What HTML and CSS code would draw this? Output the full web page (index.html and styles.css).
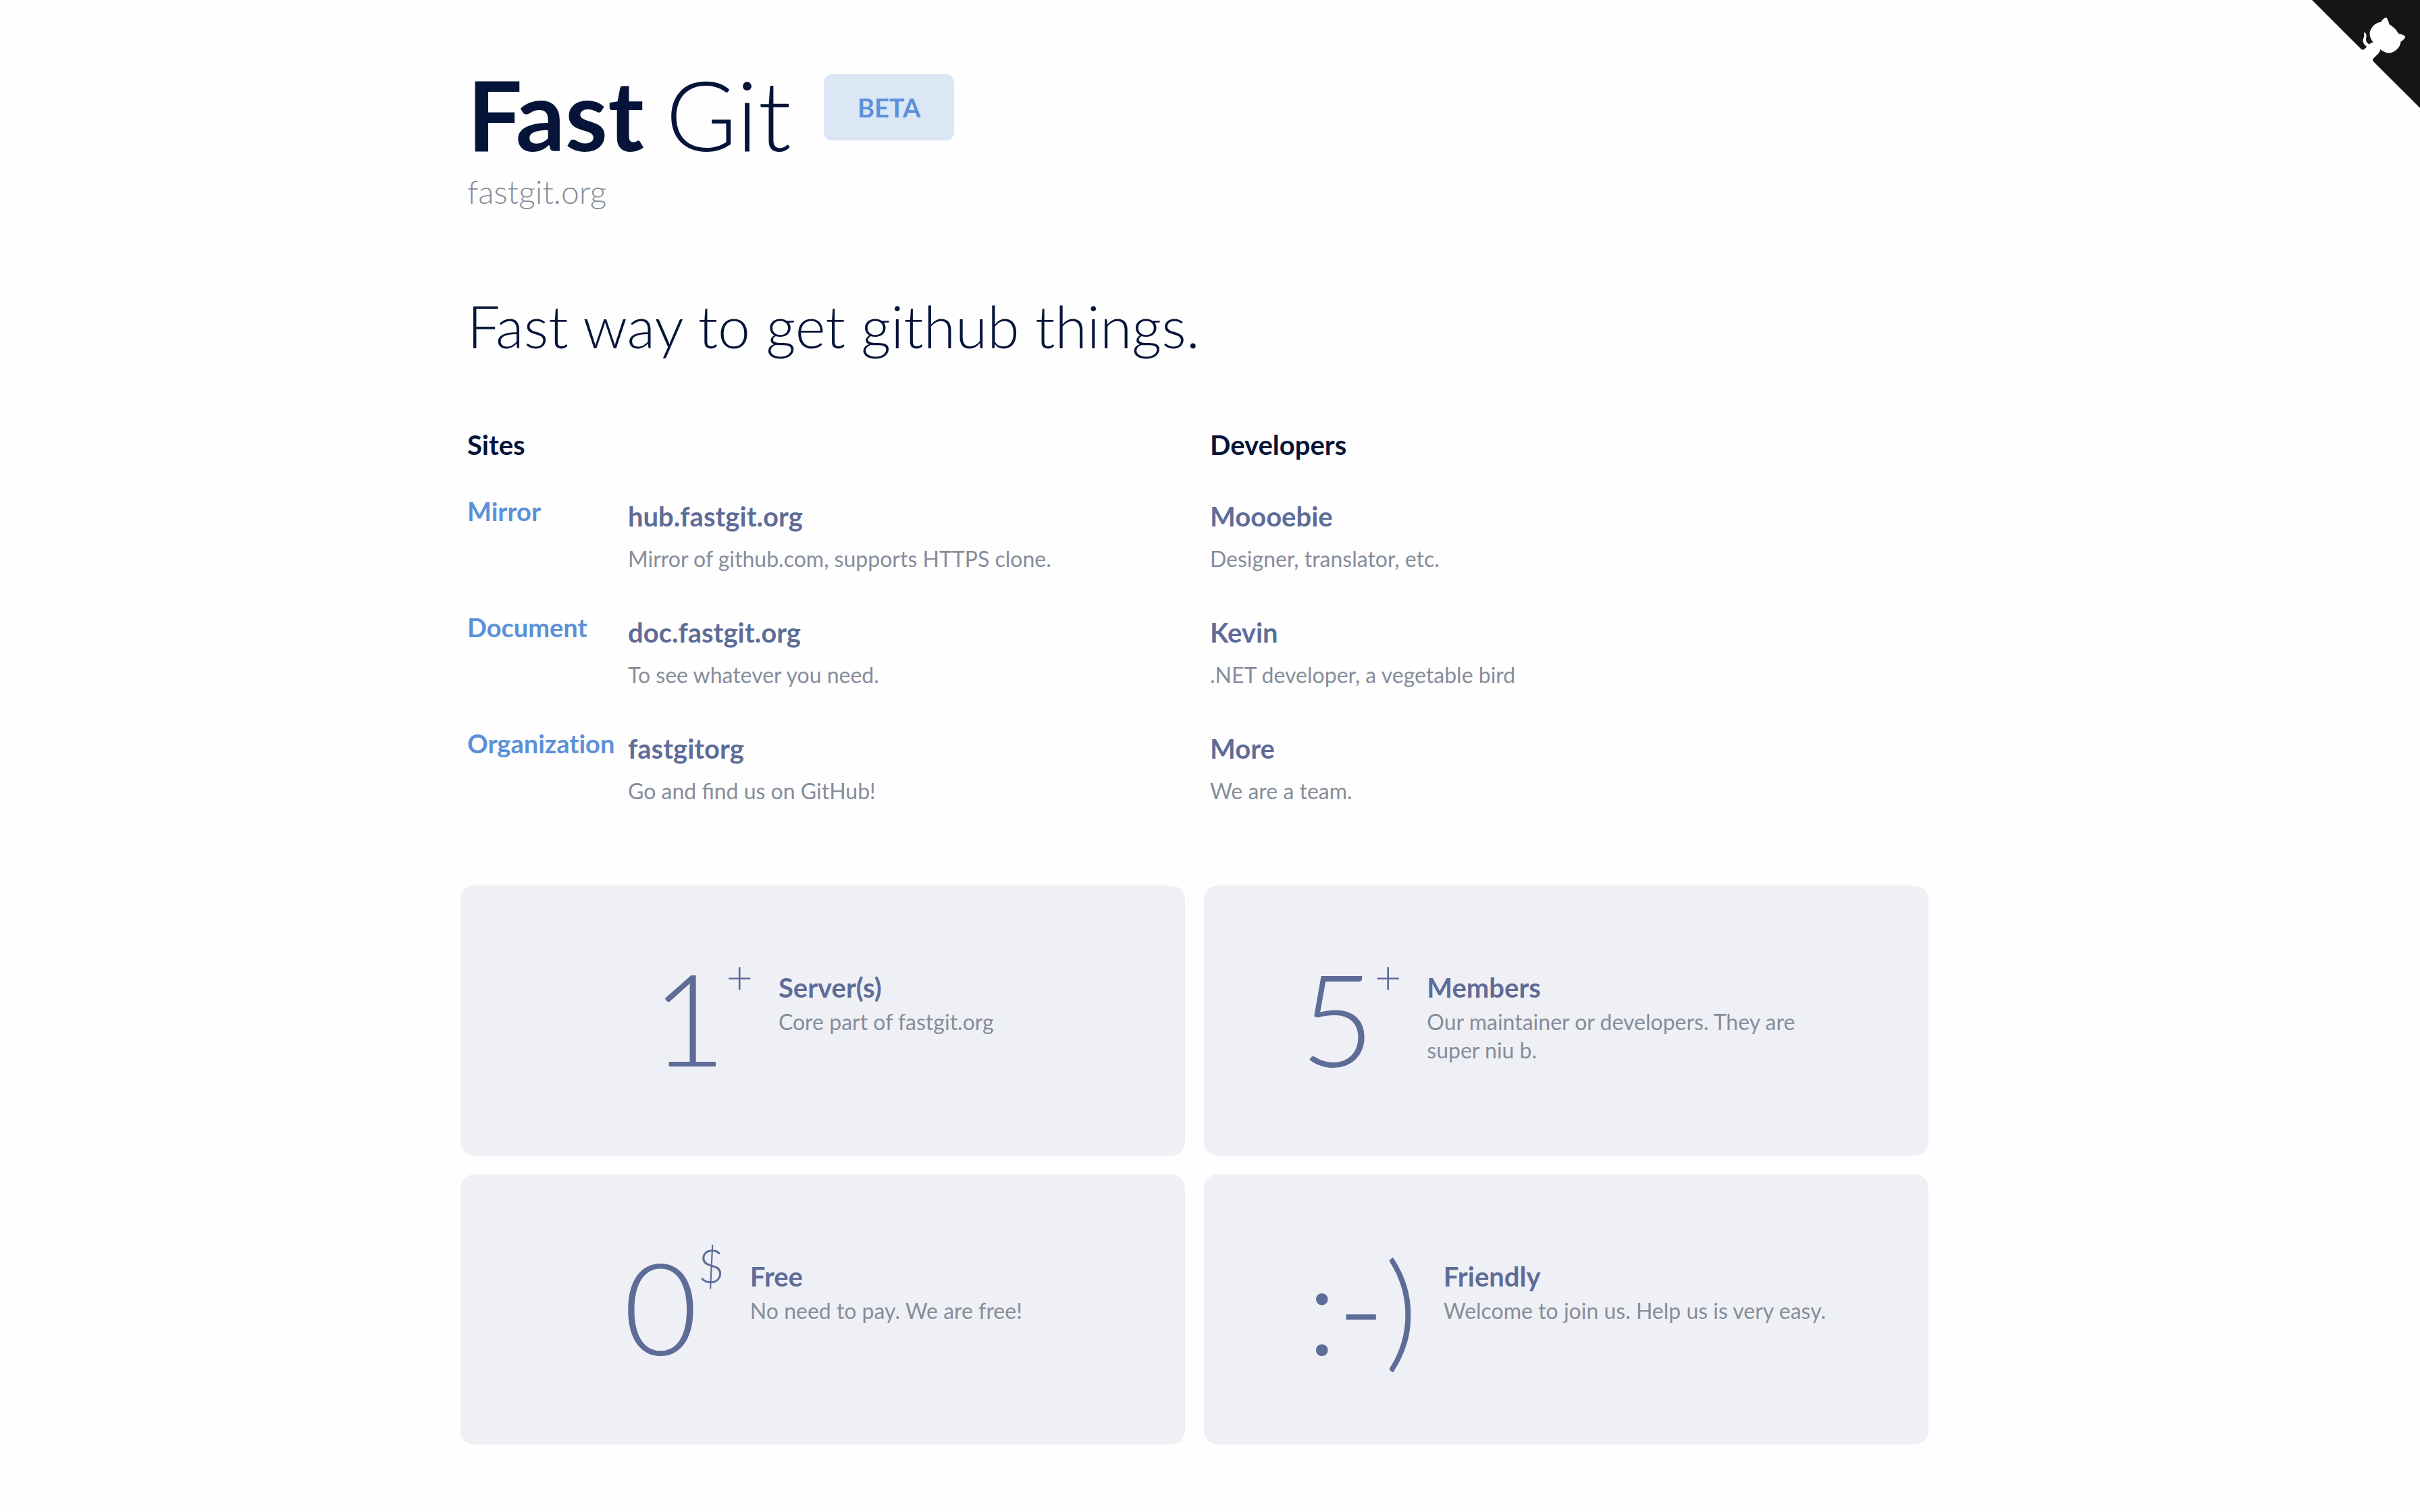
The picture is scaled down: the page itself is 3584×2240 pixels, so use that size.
FILE: index.html
```html
<!DOCTYPE html>
<html lang="en">
<head>
  <meta charset="utf-8">
  <meta name="viewport" content="width=device-width, initial-scale=1">
  <title>Fast Git</title>
  <link rel="stylesheet" href="styles.css">
</head>
<body>
  <a class="corner" href="https://github.com/fastgitorg" aria-label="View source on GitHub">
    <svg class="corner-art" viewBox="0 0 250 250" aria-hidden="true">
      <path class="corner-fill" d="M0,0 L115,115 L130,115 L142,142 L250,250 L250,0 Z"/>
      <path class="corner-cat" d="M128.3,109.0 C113.8,99.7 119.0,89.6 119.0,89.6 C122.0,82.7 120.5,78.6 120.5,78.6 C119.2,72.0 123.4,76.3 123.4,76.3 C127.3,80.9 125.5,87.3 125.5,87.3 C122.9,97.6 130.6,101.9 134.4,103.2"/>
      <path class="corner-cat" d="M115.0,115.0 C114.9,115.1 118.7,116.5 119.8,115.4 L133.7,101.6 C136.9,99.2 139.9,98.4 142.2,98.6 C133.8,88.0 127.5,74.4 143.8,58.0 C148.5,53.4 154.0,51.2 159.7,51.0 C160.3,49.4 163.2,43.6 171.4,40.1 C171.4,40.1 176.1,42.5 178.8,56.2 C183.1,58.6 187.2,61.8 190.9,65.4 C194.5,69.0 197.7,73.2 200.1,77.6 C213.8,80.2 216.3,84.9 216.3,84.9 C212.7,93.1 206.9,96.0 205.4,96.6 C205.1,102.4 203.0,107.8 198.3,112.5 C181.9,128.9 168.3,122.5 157.7,114.1 C157.9,116.9 156.7,120.9 152.7,124.9 L141.0,136.5 C139.8,137.7 141.6,141.9 141.8,141.8 Z"/>
    </svg>
  </a>

  <div class="page">
    <header class="masthead">
      <div class="brand">
        <h1 class="brand-name"><strong>Fast</strong> <span>Git</span></h1>
        <span class="badge">BETA</span>
      </div>
      <p class="domain">fastgit.org</p>
      <p class="tagline">Fast way to get github things.</p>
    </header>

    <main>
      <div class="columns">
        <section>
          <h2 class="heading">Sites</h2>
          <ul class="list">
            <li class="site">
              <a class="site-link" href="https://hub.fastgit.org">Mirror</a>
              <div class="entry">
                <h3 class="name">hub.fastgit.org</h3>
                <p class="note">Mirror of github.com, supports HTTPS clone.</p>
              </div>
            </li>
            <li class="site">
              <a class="site-link" href="https://doc.fastgit.org">Document</a>
              <div class="entry">
                <h3 class="name">doc.fastgit.org</h3>
                <p class="note">To see whatever you need.</p>
              </div>
            </li>
            <li class="site">
              <a class="site-link" href="https://github.com/fastgitorg">Organization</a>
              <div class="entry">
                <h3 class="name">fastgitorg</h3>
                <p class="note">Go and find us on GitHub!</p>
              </div>
            </li>
          </ul>
        </section>

        <section>
          <h2 class="heading">Developers</h2>
          <ul class="list">
            <li class="entry">
              <h3 class="name">Moooebie</h3>
              <p class="note">Designer, translator, etc.</p>
            </li>
            <li class="entry">
              <h3 class="name">Kevin</h3>
              <p class="note">.NET developer, a vegetable bird</p>
            </li>
            <li class="entry">
              <h3 class="name">More</h3>
              <p class="note">We are a team.</p>
            </li>
          </ul>
        </section>
      </div>

      <div class="cards">
        <section class="card">
          <div class="figure"><span class="number">1</span><span class="unit">+</span></div>
          <div class="card-text">
            <h3 class="name">Server(s)</h3>
            <p class="note">Core part of fastgit.org</p>
          </div>
        </section>
        <section class="card">
          <div class="figure"><span class="number">5</span><span class="unit">+</span></div>
          <div class="card-text">
            <h3 class="name">Members</h3>
            <p class="note">Our maintainer or developers. They are super niu b.</p>
          </div>
        </section>
        <section class="card">
          <div class="figure"><span class="number">0</span><span class="unit">$</span></div>
          <div class="card-text">
            <h3 class="name">Free</h3>
            <p class="note">No need to pay. We are free!</p>
          </div>
        </section>
        <section class="card">
          <div class="figure"><span class="number">:-)</span></div>
          <div class="card-text">
            <h3 class="name">Friendly</h3>
            <p class="note">Welcome to join us. Help us is very easy.</p>
          </div>
        </section>
      </div>
    </main>
  </div>
</body>
</html>
```
FILE: styles.css
```css
:root {
  --ink: #051438;
  --slate: #5e6c98;
  --muted: #868d9b;
  --blue: #5c90d9;
  --blue-soft: #dbe7f5;
  --panel: #eff0f5;
}

* {
  box-sizing: border-box;
}

body {
  margin: 0;
  background: #fefefe;
  color: var(--ink);
  font-family: Lato, "Liberation Sans", sans-serif;
  font-size: 32px;
  line-height: 42px;
}

h1, h2, h3, p, ul {
  margin: 0;
  padding: 0;
}

ul {
  list-style: none;
}

.corner {
  position: absolute;
  top: 0;
  right: 0;
}

.corner-art {
  display: block;
  width: 160px;
  height: 160px;
}

.corner-fill {
  fill: #151513;
}

.corner-cat {
  fill: #fff;
}

.page {
  max-width: 2200px;
  margin: 0 auto;
  padding: 87px 0 100px;
}

.brand {
  display: flex;
  align-items: flex-start;
  gap: 48px;
}

.brand-name {
  display: flex;
  gap: 32px;
  font-size: 144px;
  font-weight: 300;
  line-height: 164px;
}

.brand-name strong {
  font-weight: 700;
}

.badge {
  margin-top: 23px;
  padding: 0 50px;
  border-radius: 12px;
  background: var(--blue-soft);
  color: var(--blue);
  font-size: 38px;
  font-weight: 700;
  line-height: 98px;
}

.domain {
  color: var(--muted);
  font-size: 48px;
  font-weight: 300;
  line-height: 66px;
}

.tagline {
  margin-top: 114px;
  font-size: 86px;
  font-weight: 300;
  line-height: 104px;
}

.columns {
  display: grid;
  grid-template-columns: 1fr 1fr;
  margin-top: 100px;
}

.heading {
  font-size: 40px;
  font-weight: 700;
  line-height: 48px;
}

.list {
  display: grid;
  gap: 56px;
  margin-top: 50px;
}

.site {
  display: grid;
  grid-template-columns: 238px 1fr;
}

.site-link {
  color: var(--blue);
  font-size: 38px;
  font-weight: 700;
  font-variant-ligatures: none;
  line-height: 48px;
  text-decoration: none;
}

.entry {
  display: grid;
  gap: 18px;
  padding-top: 8px;
}

.name {
  color: var(--slate);
  font-size: 40px;
  font-weight: 700;
  line-height: 48px;
}

.note {
  color: var(--muted);
}

.cards {
  display: grid;
  grid-template-columns: 1fr 1fr;
  gap: 28px;
  margin: 119px 36px 0 -10px;
}

.card {
  display: flex;
  justify-content: center;
  align-items: flex-start;
  gap: 38px;
  padding: 80px 40px 92px;
  border-radius: 20px;
  background: var(--panel);
}

.figure {
  display: flex;
  align-items: flex-start;
  color: var(--slate);
  font-weight: 300;
}

.number {
  font-size: 190px;
  line-height: 228px;
}

.unit {
  padding-top: 14px;
  font-size: 68px;
  line-height: 82px;
}

.card-text {
  display: grid;
  gap: 6px;
  max-width: 600px;
  padding-top: 47px;
}
```
